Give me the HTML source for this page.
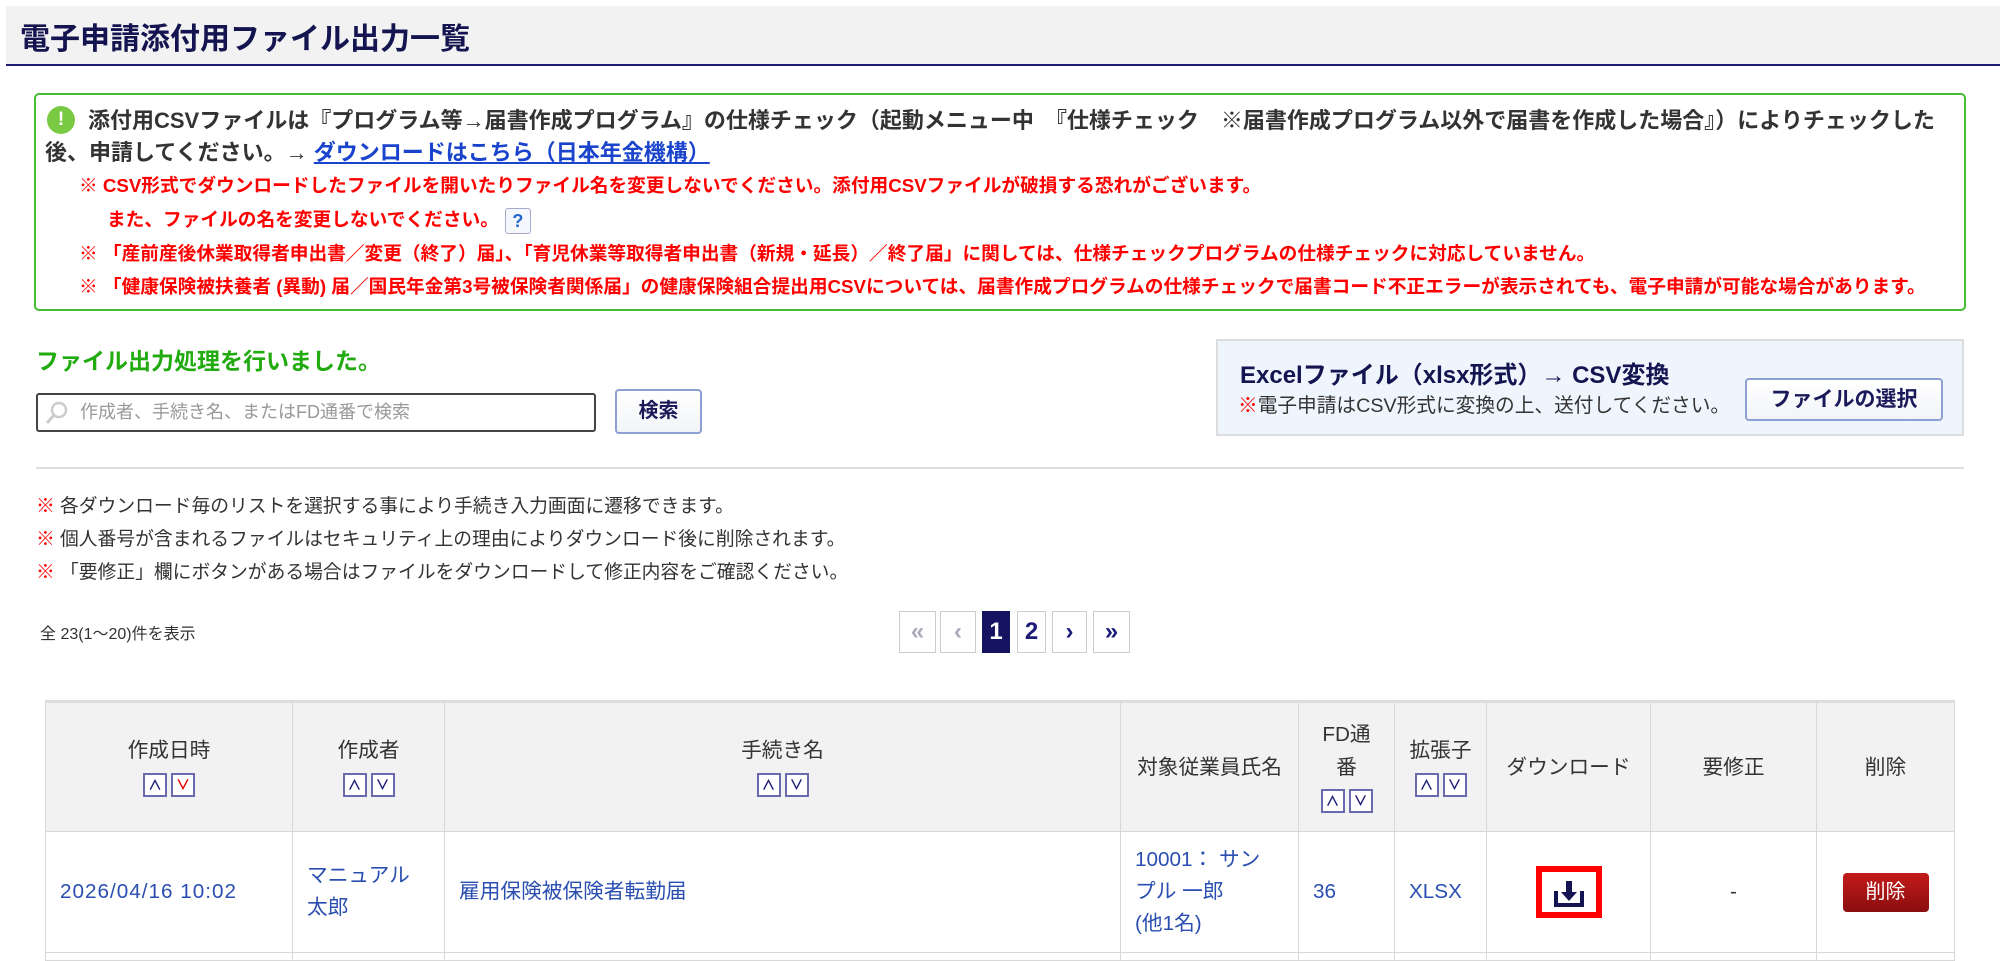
<!DOCTYPE html>
<html><head><meta charset="utf-8">
<style>
*{margin:0;padding:0;box-sizing:border-box}
html,body{width:2000px;height:961px;overflow:hidden}
body{background:#fff;font-family:"Liberation Sans","Noto Sans CJK JP",sans-serif;color:#333;position:relative}
.a{position:absolute;white-space:nowrap}
.title{left:6px;top:6px;width:1994px;height:60px;background:#f2f2f2;border-bottom:2px solid #1c1c78}
.title span{position:absolute;left:14px;top:8px;font-size:30px;font-weight:bold;color:#141450}
.gbox{left:34px;top:93px;width:1932px;height:218px;border:2px solid #44bb33;border-radius:5px}
.l1{font-size:22px;font-weight:bold;color:#333}
.red{color:#f00;font-size:18.7px;font-weight:bold}
.q{display:inline-block;width:26px;height:26px;border:1px solid #aac;border-radius:3px;background:#f4f7fc;color:#2266cc;text-align:center;line-height:24px;font-size:18px;vertical-align:middle;margin-left:6px}
.btn{border:2px solid #8da0d4;border-radius:4px;background:linear-gradient(#fff,#f2f4f8);color:#1a1a5a;font-weight:bold;text-align:center}
.pg{border:1px solid #ccc;background:#fff;color:#1c1c78;font-weight:bold;font-size:24px;text-align:center;line-height:40px;height:42px;top:611px}
.nt{font-size:18.8px;color:#333;left:36px}
table{position:absolute;left:45px;top:700px;border-collapse:collapse;font-size:20.7px}
th,td{border:1px solid #d8d8d8;text-align:center}
th{background:#f2f2f2;font-weight:normal;color:#333;height:130px;border-top:3px solid #ddd;line-height:33px}
td{height:121px;color:#2a4fb0;line-height:32px}
.s{display:inline-block;width:24px;height:24px;border:2px solid #6a6ab0;background:#fff;font-size:14px;line-height:20px;color:#1c1c78;margin:0 2px;vertical-align:middle;font-weight:bold}
</style></head><body>
<div class="a title"><span>電子申請添付用ファイル出力一覧</span></div>
<div class="a gbox"></div>
<div class="a" style="left:47px;top:106px;width:28px;height:28px;border-radius:50%;background:#7ac943;color:#fff;font-weight:bold;text-align:center;line-height:28px;font-size:19px">!</div>
<div class="a l1" style="left:88px;top:103px">添付用CSVファイルは『プログラム等→届書作成プログラム』の仕様チェック（起動メニュー中　『仕様チェック　※届書作成プログラム以外で届書を作成した場合』）によりチェックした</div>
<div class="a l1" style="left:45px;top:135px">後、申請してください。→ <span style="color:#1a44cc;text-decoration:underline">ダウンロードはこちら（日本年金機構）</span></div>
<div class="a red" style="left:79px;top:171px">※ CSV形式でダウンロードしたファイルを開いたりファイル名を変更しないでください。添付用CSVファイルが破損する恐れがございます。</div>
<div class="a red" style="left:107px;top:205px">また、ファイルの名を変更しないでください。<span class="q">?</span></div>
<div class="a red" style="left:79px;top:239px">※ 「産前産後休業取得者申出書／変更（終了）届」、「育児休業等取得者申出書（新規・延長）／終了届」に関しては、仕様チェックプログラムの仕様チェックに対応していません。</div>
<div class="a red" style="left:79px;top:272px">※ 「健康保険被扶養者 (異動) 届／国民年金第3号被保険者関係届」の健康保険組合提出用CSVについては、届書作成プログラムの仕様チェックで届書コード不正エラーが表示されても、電子申請が可能な場合があります。</div>
<div class="a" style="left:36px;top:342px;font-size:23px;font-weight:bold;color:#22aa11">ファイル出力処理を行いました。</div>
<div class="a" style="left:36px;top:393px;width:560px;height:39px;border:2px solid #444;border-radius:3px;color:#999;font-size:18px;line-height:35px;padding-left:42px">作成者、手続き名、またはFD通番で検索</div>
<svg class="a" style="left:44px;top:400px" width="26" height="26" viewBox="0 0 26 26"><circle cx="15" cy="10" r="7" fill="none" stroke="#ccc" stroke-width="2.5"/><line x1="10" y1="15" x2="3" y2="23" stroke="#ccc" stroke-width="3"/></svg>
<div class="a btn" style="left:615px;top:389px;width:87px;height:45px;line-height:41px;font-size:20px">検索</div>
<div class="a" style="left:1216px;top:339px;width:748px;height:97px;background:#eef5fc;border:2px solid #ddd"></div>
<div class="a" style="left:1240px;top:355px;font-size:24px;font-weight:bold;color:#141450">Excelファイル（xlsx形式）→ CSV変換</div>
<div class="a" style="left:1238px;top:389px;font-size:19.7px;color:#333"><span style="color:#f00">※</span>電子申請はCSV形式に変換の上、送付してください。</div>
<div class="a btn" style="left:1745px;top:378px;width:198px;height:43px;line-height:39px;font-size:21px">ファイルの選択</div>
<div class="a" style="left:36px;top:467px;width:1928px;height:2px;background:#ddd"></div>
<div class="a nt" style="top:491px"><span style="color:#f00">※</span>  各ダウンロード毎のリストを選択する事により手続き入力画面に遷移できます。</div>
<div class="a nt" style="top:524px"><span style="color:#f00">※</span>  個人番号が含まれるファイルはセキュリティ上の理由によりダウンロード後に削除されます。</div>
<div class="a nt" style="top:557px"><span style="color:#f00">※</span>  「要修正」欄にボタンがある場合はファイルをダウンロードして修正内容をご確認ください。</div>
<div class="a" style="left:40px;top:620px;font-size:16px;color:#333">全 23(1〜20)件を表示</div>
<div class="a pg" style="left:899px;width:37px;color:#aab">«</div>
<div class="a pg" style="left:940px;width:36px;color:#aab">‹</div>
<div class="a pg" style="left:982px;width:28px;background:#141460;color:#fff;border-color:#141460">1</div>
<div class="a pg" style="left:1017px;width:29px">2</div>
<div class="a pg" style="left:1052px;width:35px">›</div>
<div class="a pg" style="left:1093px;width:37px">»</div>
<table>
<tr>
<th style="width:247px">作成日時<br><span class="s">∧</span><span class="s" style="color:#e00">∨</span></th>
<th style="width:152px">作成者<br><span class="s">∧</span><span class="s">∨</span></th>
<th style="width:676px">手続き名<br><span class="s">∧</span><span class="s">∨</span></th>
<th style="width:178px">対象従業員氏名</th>
<th style="width:96px">FD通<br>番<br><span class="s">∧</span><span class="s">∨</span></th>
<th style="width:92px">拡張子<br><span class="s">∧</span><span class="s">∨</span></th>
<th style="width:164px">ダウンロード</th>
<th style="width:166px">要修正</th>
<th style="width:138px">削除</th>
</tr>
<tr>
<td style="text-align:left;padding-left:14px;letter-spacing:1px">2026/04/16 10:02</td>
<td style="text-align:left;padding-left:14px">マニュアル<br>太郎</td>
<td style="text-align:left;padding-left:14px">雇用保険被保険者転勤届</td>
<td style="text-align:left;padding-left:14px">10001： サン<br>プル 一郎<br>(他1名)</td>
<td style="text-align:left;padding-left:14px">36</td>
<td style="text-align:left;padding-left:14px">XLSX</td>
<td><div style="display:inline-block;width:66px;height:52px;border:6px solid #f00;vertical-align:middle;padding-top:7px"><svg width="30" height="28" viewBox="0 0 30 28"><path d="M2 12v14h26V12" fill="none" stroke="#141450" stroke-width="4"/><rect x="12" y="2" width="6" height="12" fill="#141450"/><path d="M7 13h16l-8 9z" fill="#141450"/></svg></div></td>
<td style="color:#333">-</td>
<td><div style="display:inline-block;width:86px;height:39px;border-radius:4px;background:linear-gradient(#c41a1a,#8a0e0e);color:#fff;line-height:39px;font-size:20px">削除</div></td>
</tr>
<tr><td style="height:8px;line-height:0"></td><td style="height:8px;line-height:0"></td><td style="height:8px;line-height:0"></td><td style="height:8px;line-height:0"></td><td style="height:8px;line-height:0"></td><td style="height:8px;line-height:0"></td><td style="height:8px;line-height:0"></td><td style="height:8px;line-height:0"></td><td style="height:8px;line-height:0"></td></tr>
</table>
</body></html>
